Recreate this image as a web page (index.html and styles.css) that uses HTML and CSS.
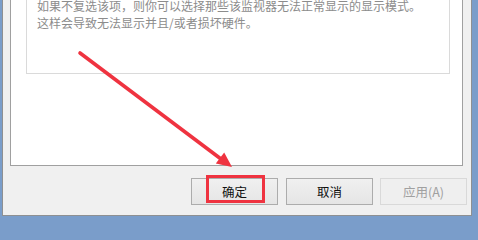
FILE: index.html
```html
<!DOCTYPE html>
<html lang="zh-CN">
<head>
<meta charset="utf-8">
<title>显示设置</title>
<link rel="stylesheet" href="styles.css">
</head>
<body>
<div class="window">
  <div class="panel">
    <div class="note">
      <p class="note-text">如果不复选该项，则你可以选择那些该监视器无法正常显示的显示模式。<br>这样会导致无法显示并且/或者损坏硬件。</p>
    </div>
  </div>
  <div class="actions">
    <button class="btn">确定</button>
    <button class="btn btn-cancel">取消</button>
    <button class="btn btn-apply" disabled>应用(A)</button>
  </div>
</div>
<svg class="annotation" width="478" height="221" viewBox="0 0 478 221">
  <line x1="80" y1="53" x2="221" y2="159" stroke="#ef3340" stroke-width="3.6" stroke-linecap="round"/>
  <polygon points="232,167 215.8,163.6 224.2,152.4" fill="#ef3340"/>
  <rect x="207.5" y="176.5" width="56" height="25" fill="none" stroke="#ef3340" stroke-width="3"/>
</svg>
</body>
</html>
```
FILE: styles.css
```css
html, body {
  margin: 0;
  padding: 0;
}
body {
  width: 478px;
  height: 221px;
  background: #7a9dca;
  overflow: hidden;
  position: relative;
  font-family: "Noto Sans CJK SC", sans-serif;
}
.window {
  margin-left: 2px;
  width: 457px;
  height: 215px;
  padding: 0 4px 0 7px;
  background: #f0f0f0;
  border: 1px solid #8e9092;
  border-top: none;
}
.panel {
  height: 165px;
  margin-right: 4px;
  padding: 0 12px 0 15px;
  background: #ffffff;
  border: 1px solid #a0a0a0;
  border-top: none;
}
.note {
  display: flow-root;
  height: 73px;
  border: 1px solid #dadada;
  border-top: none;
}
.note-text {
  margin: -3px 0 0 10px;
  font-family: "Noto Sans CJK SC", sans-serif;
  font-size: 12px;
  line-height: 17px;
  color: #8c8c8c;
  white-space: nowrap;
}
.actions {
  display: flex;
  justify-content: flex-end;
  margin-top: 12px;
}
.btn {
  box-sizing: border-box;
  width: 87px;
  height: 27px;
  padding: 0;
  border: 1px solid #acacac;
  background: linear-gradient(#f0f0f0, #e5e5e5);
  font-family: "Noto Sans CJK SC", sans-serif;
  font-size: 12.5px;
  line-height: 25px;
  color: #111111;
}
.btn-cancel {
  margin-left: 8px;
}
.btn-apply {
  margin-left: 7px;
  border-color: #d9d9d9;
  background: #efefef;
  color: #a0a0a0;
}
.annotation {
  position: absolute;
  left: 0;
  top: 0;
  pointer-events: none;
}
```
